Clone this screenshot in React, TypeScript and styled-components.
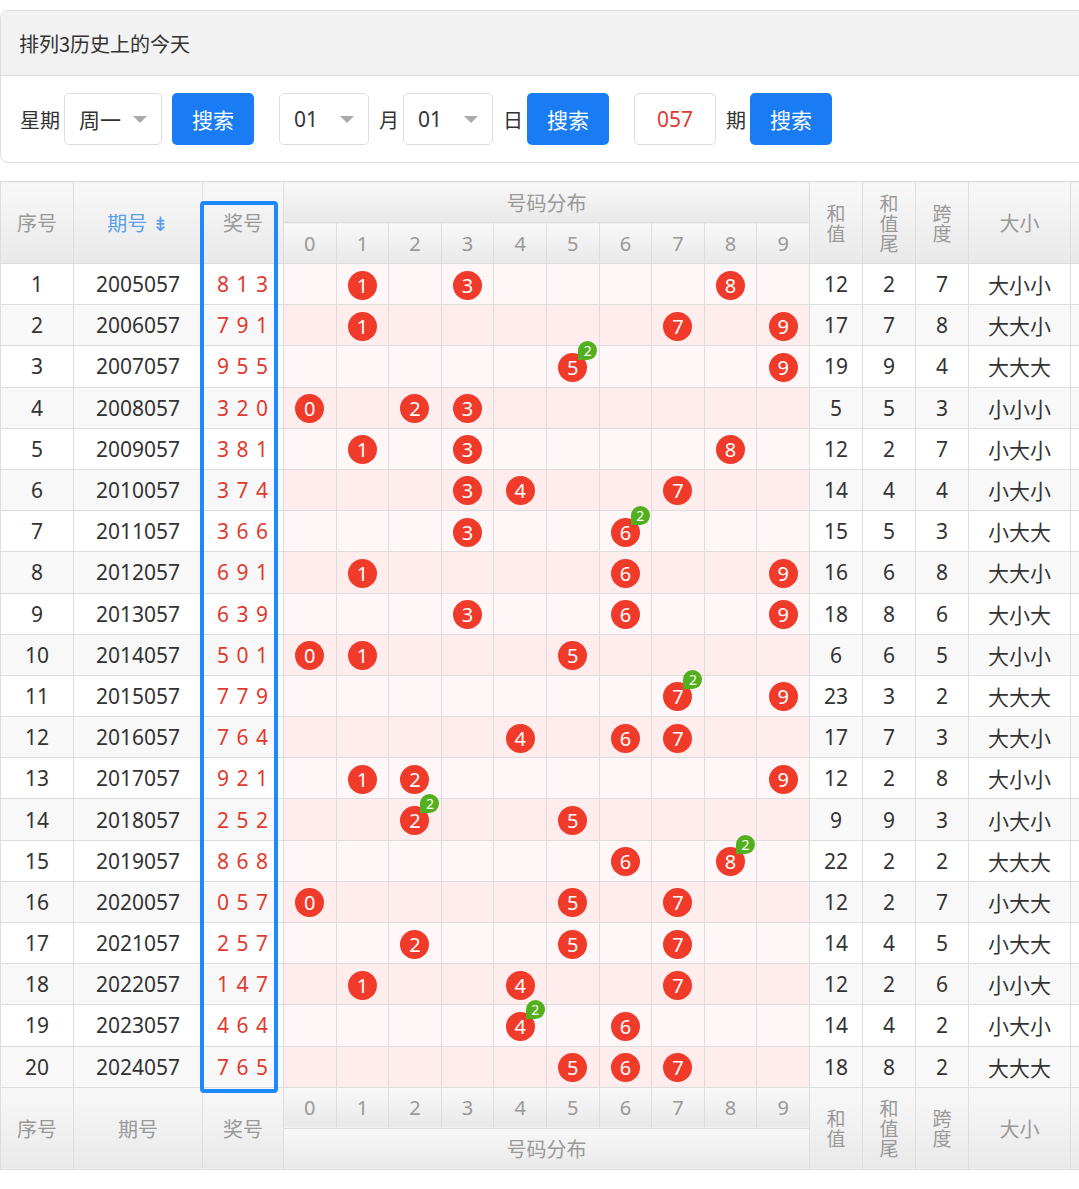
import React from 'react';
import styled, { createGlobalStyle } from 'styled-components';

const Global = createGlobalStyle`
  body { margin: 0; background: #fff; overflow: hidden; font-family: "Noto Sans", "Noto Sans CJK SC", sans-serif; }
`;

const Page = styled.div`
  width: 1110px;
  padding-top: 10px;
`;

const Panel = styled.div`
  border: 1px solid #ddd;
  border-radius: 8px;
  margin-right: 10px;
  overflow: hidden;
`;

const PanelHead = styled.div`
  height: 64px;
  background: #f2f2f2;
  border-bottom: 1px solid #ddd;
  display: flex;
  align-items: center;
  padding-left: 18px;
  font-size: 20px;
  color: #333;
  font-family: "Noto Sans CJK SC", sans-serif;
`;

const PanelBody = styled.div`
  display: flex;
  align-items: center;
  height: 86px;
  padding-left: 19px;
  gap: 10px;
`;

const Label = styled.span`
  font-size: 20px;
  color: #333;
  font-family: "Noto Sans CJK SC", sans-serif;
  margin-right: -6px;
`;

const Select = styled.div<{ $w: number }>`
  width: ${p => p.$w}px;
  height: 52px;
  box-sizing: border-box;
  border: 1px solid #ddd;
  border-radius: 5px;
  display: flex;
  align-items: center;
  justify-content: space-between;
  padding: 0 14px 0 14px;
  font-size: 21px;
  color: #333;
  font-family: "Noto Sans", "Noto Sans CJK SC", sans-serif;
  &::after {
    content: '';
    border-left: 7px solid transparent;
    border-right: 7px solid transparent;
    border-top: 7px solid #aaa;
  }
`;

const Input = styled.div`
  width: 82px;
  height: 52px;
  box-sizing: border-box;
  border: 1px solid #ddd;
  border-radius: 5px;
  display: flex;
  align-items: center;
  justify-content: center;
  font-size: 21px;
  color: #e03a2f;
  margin-left: 7px;
`;

const Button = styled.div`
  width: 82px;
  height: 52px;
  background: #1a7cf5;
  color: #fff;
  border-radius: 5px;
  display: flex;
  align-items: center;
  justify-content: center;
  font-size: 21px;
  font-family: "Noto Sans CJK SC", sans-serif;
  margin-right: 8px;
`;

const TableWrap = styled.div`
  position: relative;
  margin-top: 18px;
`;

const Table = styled.table`
  border-collapse: collapse;
  table-layout: fixed;
  width: 1100px;
  font-size: 21px;
  color: #333;
  td, th { border: 1px solid #ddd; padding: 0; text-align: center; }
`;

const Head = styled.th<{ $blue?: boolean; $vert?: boolean }>`
  background: linear-gradient(#f8f8f8, #e9e9e9);
  color: ${p => (p.$blue ? '#5aa0ee' : '#999')};
  font-weight: normal;
  font-family: "Noto Sans CJK SC", sans-serif;
  font-size: ${p => (p.$vert ? '19px' : '20px')};
  line-height: ${p => (p.$vert ? '20px' : 'normal')};
  height: 40px;
`;

const Row = styled.tr<{ $alt: boolean }>`
  height: 41.2px;
  background: ${p => (p.$alt ? '#f8f8f8' : '#fff')};
`;

const Cell = styled.td<{ $cn?: boolean }>`
  font-family: ${p => (p.$cn ? '"Noto Sans CJK SC", sans-serif' : '"Noto Sans", sans-serif')};
`;

const Draw = styled.td`
  color: #e03a2f;
  letter-spacing: 1px;
`;

const Dig = styled.td<{ $alt: boolean }>`
  background: ${p => (p.$alt ? '#ffeded' : '#fff7f7')};
  position: relative;
`;

const Ball = styled.span`
  display: inline-flex;
  width: 29px;
  height: 29px;
  border-radius: 50%;
  background: #f03a2a;
  color: #fff;
  font-size: 20px;
  align-items: center;
  justify-content: center;
  position: relative;
  vertical-align: middle;
`;

const Badge = styled.span`
  position: absolute;
  right: -10px;
  top: -12px;
  width: 19px;
  height: 19px;
  border-radius: 50% 50% 50% 0;
  background: #52b01e;
  color: #fff;
  font-size: 14px;
  line-height: 19px;
  text-align: center;
`;

const Frame = styled.div`
  position: absolute;
  left: 200px;
  top: 20px;
  width: 78px;
  height: 892px;
  box-sizing: border-box;
  border: 4px solid #1e88ff;
  border-radius: 4px;
  pointer-events: none;
`;

const draws = ['813', '791', '955', '320', '381', '374', '366', '691', '639', '501', '779', '764', '921', '252', '868', '057', '257', '147', '464', '765'];

const digits = [0, 1, 2, 3, 4, 5, 6, 7, 8, 9];

function DigitHeads() {
  return <>{digits.map(d => <Head key={d} style={{ fontFamily: '"Noto Sans", sans-serif' }}>{d}</Head>)}</>;
}

function SideHeads() {
  return (
    <>
      <Head rowSpan={2} $vert>和<br />值</Head>
      <Head rowSpan={2} $vert>和<br />值<br />尾</Head>
      <Head rowSpan={2} $vert>跨<br />度</Head>
      <Head rowSpan={2}>大小</Head>
      <Head rowSpan={2}></Head>
    </>
  );
}

export default function App() {
  return (
    <Page>
      <Global />
      <Panel>
        <PanelHead>排列3历史上的今天</PanelHead>
        <PanelBody>
          <Label>星期</Label>
          <Select $w={98}>周一</Select>
          <Button>搜索</Button>
          <Select $w={90} style={{ marginLeft: 7 }}>01</Select>
          <Label>月</Label>
          <Select $w={90}>01</Select>
          <Label>日</Label>
          <Button>搜索</Button>
          <Input>057</Input>
          <Label>期</Label>
          <Button>搜索</Button>
        </PanelBody>
      </Panel>
      <TableWrap>
        <Table>
          <colgroup>
            <col style={{ width: 73 }} />
            <col style={{ width: 129 }} />
            <col style={{ width: 81 }} />
            {digits.map(d => <col key={d} style={{ width: 52.6 }} />)}
            <col style={{ width: 53 }} />
            <col style={{ width: 53 }} />
            <col style={{ width: 53 }} />
            <col style={{ width: 102 }} />
            <col style={{ width: 30 }} />
          </colgroup>
          <thead>
            <tr>
              <Head rowSpan={2}>序号</Head>
              <Head rowSpan={2} $blue>期号 ⇟</Head>
              <Head rowSpan={2}>奖号</Head>
              <Head colSpan={10}>号码分布</Head>
              <SideHeads />
            </tr>
            <tr><DigitHeads /></tr>
          </thead>
          <tbody>
            {draws.map((s, i) => {
              const n = s.split('').map(Number);
              const sum = n[0] + n[1] + n[2];
              const span = Math.max(...n) - Math.min(...n);
              const alt = i % 2 === 1;
              return (
                <Row key={i} $alt={alt}>
                  <Cell>{i + 1}</Cell>
                  <Cell>{2005 + i}057</Cell>
                  <Draw>{n.join(' ')}</Draw>
                  {digits.map(d => {
                    const c = n.filter(x => x === d).length;
                    return (
                      <Dig key={d} $alt={alt}>
                        {c > 0 && <Ball>{d}{c > 1 && <Badge>{c}</Badge>}</Ball>}
                      </Dig>
                    );
                  })}
                  <Cell>{sum}</Cell>
                  <Cell>{sum % 10}</Cell>
                  <Cell>{span}</Cell>
                  <Cell $cn>{n.map(x => (x >= 5 ? '大' : '小')).join('')}</Cell>
                  <Cell></Cell>
                </Row>
              );
            })}
          </tbody>
          <tfoot>
            <tr>
              <Head rowSpan={2}>序号</Head>
              <Head rowSpan={2}>期号</Head>
              <Head rowSpan={2}>奖号</Head>
              <DigitHeads />
              <SideHeads />
            </tr>
            <tr><Head colSpan={10}>号码分布</Head></tr>
          </tfoot>
        </Table>
        <Frame />
      </TableWrap>
    </Page>
  );
}
